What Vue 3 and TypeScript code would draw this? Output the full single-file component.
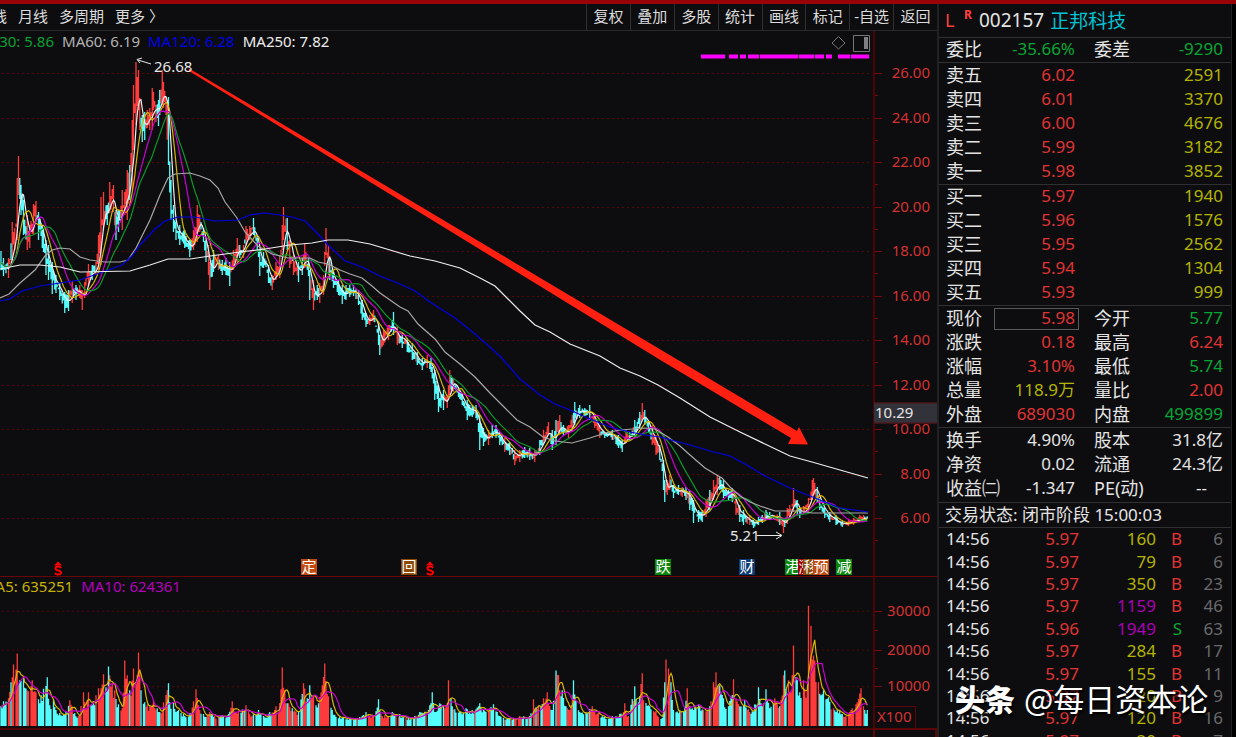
<script setup lang="ts">
type Pt = [number, number]
type Band = [number, number, number]

const W = 873
const PRICE_TOP = 31
const PRICE_H = 545
const VOL_TOP = 576
const VOL_H = 152
const BASE = 726
const STEP = 1.25
const LAST = 868

const band: Band[] = [
  [0, 241, 283], [4, 258, 276], [9, 258, 278], [12, 222, 262], [15, 228, 250], [17, 178, 240], [19, 156, 195],
  [21, 185, 215], [24, 200, 235], [27, 215, 250], [30, 225, 248], [33, 204, 235], [36, 201, 222], [39, 212, 240],
  [42, 225, 248], [44, 228, 252], [46, 240, 275], [49, 245, 280], [52, 262, 294], [56, 275, 293], [60, 283, 300],
  [65, 292, 313], [68, 290, 311], [72, 281, 303], [76, 285, 300], [80, 285, 298], [82, 290, 310], [85, 282, 298],
  [88, 264, 286], [92, 265, 280], [96, 262, 275], [99, 235, 270], [101, 197, 265], [104, 192, 230], [107, 205, 225],
  [110, 182, 213], [113, 185, 212], [116, 210, 240], [119, 210, 232], [122, 190, 230], [125, 192, 215],
  [127, 170, 220], [130, 165, 200], [132, 120, 190], [134, 85, 150], [136, 62, 125], [138, 70, 110], [140, 98, 130],
  [142, 115, 142], [145, 112, 140], [147, 110, 128], [150, 108, 130], [152, 88, 130], [154, 92, 110],
  [156, 105, 122], [158, 100, 126], [160, 90, 115], [162, 70, 105], [164, 82, 108], [166, 97, 115], [168, 97, 165],
  [169, 125, 190], [171, 180, 220], [173, 205, 232], [176, 222, 240], [180, 225, 245], [185, 230, 248],
  [190, 240, 257], [194, 230, 250], [197, 205, 242], [200, 215, 232], [203, 228, 242], [206, 240, 262],
  [208, 245, 275], [210, 262, 290], [214, 250, 272], [218, 255, 270], [222, 260, 275], [226, 258, 275],
  [230, 262, 286], [233, 250, 270], [237, 238, 262], [240, 245, 258], [243, 245, 258], [246, 226, 245],
  [250, 226, 240], [254, 218, 235], [257, 238, 250], [260, 250, 276], [264, 252, 268], [268, 265, 283],
  [272, 275, 290], [276, 262, 280], [280, 255, 278], [282, 225, 250], [284, 207, 240], [287, 218, 250],
  [290, 240, 268], [294, 255, 275], [298, 262, 282], [302, 258, 275], [305, 243, 268], [308, 258, 276],
  [310, 270, 300], [313, 280, 310], [317, 285, 300], [320, 283, 303], [323, 275, 295], [326, 228, 255],
  [328, 245, 275], [330, 258, 280], [334, 272, 288], [338, 280, 295], [342, 285, 304], [346, 285, 300],
  [350, 285, 297], [354, 285, 296], [358, 290, 305], [362, 300, 320], [366, 313, 327], [370, 315, 325],
  [374, 310, 322], [378, 325, 345], [380, 335, 355], [384, 330, 345], [388, 325, 340], [393, 312, 335],
  [397, 325, 345], [402, 333, 348], [407, 338, 352], [412, 343, 360], [417, 352, 365], [422, 358, 370],
  [427, 355, 368], [431, 358, 372], [435, 370, 400], [439, 385, 412], [443, 390, 410], [447, 395, 408],
  [450, 370, 395], [454, 378, 392], [458, 387, 397], [462, 393, 405], [467, 400, 420], [472, 405, 417],
  [476, 405, 418], [480, 415, 450], [484, 428, 446], [488, 430, 445], [492, 425, 438], [496, 425, 438],
  [500, 432, 445], [505, 438, 452], [510, 442, 455], [515, 450, 465], [520, 450, 462], [525, 447, 458],
  [530, 448, 460], [535, 450, 462], [540, 440, 455], [544, 430, 445], [548, 422, 435], [552, 430, 450],
  [556, 420, 445], [560, 415, 435], [564, 425, 436], [568, 425, 438], [572, 415, 432], [575, 402, 425],
  [580, 405, 418], [585, 408, 416], [590, 405, 420], [595, 415, 428], [600, 425, 438], [605, 432, 438],
  [612, 430, 440], [618, 435, 448], [622, 440, 452], [626, 430, 443], [630, 432, 440], [635, 420, 438],
  [640, 412, 428], [642, 403, 420], [645, 410, 425], [648, 420, 432], [652, 425, 445], [656, 435, 455],
  [660, 445, 460], [663, 460, 490], [665, 480, 502], [667, 480, 495], [670, 475, 490], [674, 485, 498],
  [678, 485, 495], [682, 487, 497], [686, 487, 500], [690, 490, 510], [694, 500, 523], [698, 510, 522],
  [702, 510, 522], [706, 500, 517], [710, 490, 510], [714, 480, 500], [717, 475, 495], [720, 477, 490],
  [724, 480, 498], [728, 490, 500], [732, 488, 502], [736, 497, 515], [740, 505, 522], [744, 510, 525],
  [750, 515, 525], [754, 520, 528], [758, 517, 525], [762, 515, 523], [766, 510, 520], [770, 512, 520],
  [775, 515, 520], [780, 512, 525], [784, 520, 533], [787, 508, 524], [790, 505, 520], [794, 488, 512],
  [797, 500, 515], [800, 508, 518], [804, 506, 514], [808, 498, 512], [812, 480, 500], [814, 478, 495],
  [817, 487, 503], [820, 498, 510], [825, 508, 518], [830, 512, 522], [836, 515, 525], [842, 521, 527],
  [848, 520, 526], [854, 518, 525], [860, 515, 522], [864, 515, 522], [869, 513, 523],
]

const volume: Pt[] = [
  [0, 701], [4, 701], [8, 698], [11, 682], [14, 664], [17, 653], [20, 680], [23, 678], [27, 690], [32, 680],
  [36, 692], [41, 695], [47, 677], [50, 705], [53, 700], [56, 710], [60, 713], [66, 712], [70, 700], [75, 713],
  [79, 716], [83, 692], [86, 708], [88, 692], [92, 705], [96, 695], [98, 688], [101, 688], [104, 674], [107, 690],
  [109, 666], [112, 683], [115, 690], [118, 704], [122, 708], [125, 660], [127, 675], [130, 690], [134, 668],
  [137, 675], [139, 652], [141, 690], [145, 702], [150, 706], [153, 700], [157, 708], [160, 712], [164, 702],
  [168, 683], [170, 702], [174, 702], [178, 710], [184, 714], [190, 713], [196, 689], [199, 705], [204, 714],
  [210, 712], [215, 716], [222, 715], [228, 714], [232, 701], [236, 712], [246, 705], [250, 714], [258, 710],
  [264, 716], [270, 712], [276, 706], [279, 712], [282, 667], [285, 690], [288, 703], [292, 708], [298, 712],
  [304, 683], [307, 698], [310, 685], [314, 695], [318, 703], [322, 685], [325, 663], [328, 696], [332, 710],
  [340, 716], [350, 718], [360, 717], [366, 712], [374, 716], [378, 699], [382, 716], [392, 712], [400, 714],
  [408, 718], [415, 716], [420, 712], [428, 710], [432, 692], [435, 712], [440, 703], [446, 706], [449, 680],
  [452, 706], [460, 712], [466, 708], [472, 710], [480, 703], [486, 712], [493, 704], [500, 716], [510, 718],
  [520, 716], [530, 716], [533, 699], [538, 705], [543, 698], [547, 692], [552, 710], [556, 670], [558, 675],
  [562, 690], [566, 706], [570, 710], [573, 680], [576, 700], [580, 712], [586, 712], [592, 706], [598, 713],
  [605, 717], [612, 716], [620, 714], [625, 703], [628, 716], [635, 686], [638, 702], [642, 673], [644, 700],
  [650, 706], [656, 711], [662, 718], [666, 659], [668, 668], [671, 682], [674, 710], [680, 710], [684, 712],
  [687, 688], [690, 706], [698, 704], [704, 710], [710, 706], [713, 682], [716, 672], [720, 685], [724, 698],
  [728, 706], [733, 679], [736, 698], [740, 706], [745, 700], [750, 712], [755, 704], [758, 687], [762, 706],
  [766, 689], [770, 708], [775, 698], [780, 706], [783, 675], [785, 670], [788, 680], [791, 692], [794, 645],
  [797, 680], [800, 692], [803, 680], [807, 690], [809, 605], [811, 625], [813, 655], [815, 660], [818, 682],
  [821, 695], [824, 690], [828, 697], [834, 708], [840, 710], [846, 716], [852, 708], [857, 702], [861, 688],
  [864, 706], [867, 710], [869, 680],
]

const ma60: Pt[] = [
  [0, 298], [9, 294], [20, 283], [35, 270], [45, 256], [52, 250], [60, 248], [70, 249], [80, 257], [90, 260],
  [105, 262], [120, 262], [128, 260], [136, 248], [150, 220], [160, 195], [168, 178], [175, 174], [190, 173],
  [200, 176], [210, 180], [218, 188], [225, 202], [237, 218], [245, 232], [258, 246], [272, 254], [288, 258],
  [310, 258], [318, 262], [328, 264], [340, 270], [350, 274], [362, 278], [372, 286], [380, 293], [400, 307],
  [408, 311], [418, 324], [435, 339], [445, 352], [460, 364], [475, 377], [490, 393], [505, 408], [517, 420],
  [530, 427], [543, 437], [555, 441], [572, 443], [590, 438], [605, 433], [620, 430], [645, 428], [655, 429],
  [668, 437], [680, 446], [690, 455], [705, 468], [715, 474], [722, 478], [730, 487], [740, 496], [750, 502],
  [760, 506], [775, 511], [800, 511], [812, 513], [868, 513],
]
const ma120: Pt[] = [
  [0, 301], [10, 299], [22, 291], [40, 286], [60, 283], [80, 280], [100, 273], [122, 265], [132, 256], [140, 245],
  [155, 229], [165, 221], [178, 217], [195, 217], [215, 221], [238, 220], [250, 215], [265, 213], [280, 215],
  [292, 217], [305, 221], [315, 231], [330, 247], [345, 261], [362, 267], [380, 276], [400, 284], [415, 291],
  [430, 302], [455, 318], [475, 334], [500, 356], [520, 379], [540, 395], [555, 404], [570, 410], [590, 419],
  [610, 427], [630, 432], [645, 435], [660, 437], [675, 441], [690, 445], [710, 451], [730, 456], [745, 464],
  [765, 476], [790, 488], [810, 496], [825, 502], [840, 508], [868, 512],
]
const ma250: Pt[] = [
  [0, 269], [20, 265], [40, 265], [60, 267], [80, 272], [130, 271], [150, 265], [168, 259], [190, 259], [210, 256],
  [240, 252], [265, 249], [290, 245], [312, 243], [328, 240], [348, 240], [370, 244], [380, 247], [410, 256],
  [435, 261], [460, 268], [480, 278], [495, 286], [508, 299], [520, 311], [535, 325], [550, 332], [570, 344],
  [600, 356], [620, 368], [640, 376], [658, 385], [680, 398], [710, 417], [740, 432], [765, 444], [790, 456],
  [812, 462], [840, 470], [868, 478],
]

let seed = 20211
function rand(): number {
  seed = (seed * 16807) % 2147483647
  return seed / 2147483647
}

function at(points: number[][], x: number, k: number): number {
  for (let i = 1; i < points.length; i++) {
    const a = points[i - 1]
    const b = points[i]
    if (x <= b[0]) return a[k] + ((b[k] - a[k]) * (x - a[0])) / (b[0] - a[0])
  }
  return points[points.length - 1][k]
}

function average(values: number[], n: number): number[] {
  return values.map((_, i) => {
    const part = values.slice(Math.max(0, i - n + 1), i + 1)
    return part.reduce((s, v) => s + v, 0) / part.length
  })
}

const line = (pts: number[][]): string => 'M' + pts.map((p) => p[0] + ' ' + p[1].toFixed(1)).join('L')

const xs: number[] = []
for (let x = 1; x <= LAST; x += STEP) xs.push(x)

const closes: number[] = []
const wick = { up: '', down: '' }
const volBar = { up: '', down: '' }
const vols: number[] = []
let run = 0
let side: 'up' | 'down' = 'up'

xs.forEach((x, i) => {
  const key = band.find((p) => Math.abs(p[0] - x) < 0.63)
  const top = at(band, x, 1)
  const bottom = at(band, x, 2)
  const span = bottom - top
  const hi = key ? key[1] : top + span * (0.1 + rand() * 0.4)
  const lo = key ? key[2] : bottom - span * (0.1 + rand() * 0.4)
  const close = (top + bottom) / 2 + (rand() - 0.5) * span * 0.35
  if (run <= 0) {
    const drift = at(band, x + 2, 1) - at(band, x - 4, 1)
    side = rand() < 0.5 - Math.max(-0.42, Math.min(0.34, drift / 24)) ? 'up' : 'down'
    run = 1 + Math.floor(rand() * 3)
  }
  run--
  closes.push(close)
  wick[side] += `M${x} ${hi.toFixed(1)}V${lo.toFixed(1)}`

  const peak = volume.find((p) => Math.abs(p[0] - x) < 0.63)
  const height = peak ? BASE - peak[1] : (BASE - at(volume, x, 1)) * (0.7 + rand() * 0.28)
  vols.push(BASE - height)
  if (i % 6 !== 5 || peak) volBar[side] += `M${x} ${BASE}V${(BASE - height).toFixed(1)}`
})

const zip = (ys: number[]): number[][] => xs.map((x, i) => [x, ys[i]])

const priceLines = [
  { name: 'ma5', d: line(zip(average(closes, 5))) },
  { name: 'ma10', d: line(zip(average(closes, 11))) },
  { name: 'ma20', d: line(zip(average(closes, 21))) },
  { name: 'ma30', d: line(zip(average(closes, 31))) },
  { name: 'ma60', d: line(ma60) },
  { name: 'ma120', d: line(ma120) },
  { name: 'ma250', d: line(ma250) },
]
const volLines = [
  { name: 'ma10', d: line(zip(average(vols, 6))) },
  { name: 'ma20', d: line(zip(average(vols, 12))) },
]

const priceTicks = [26, 24, 22, 20, 18, 16, 14, 12, 10, 8, 6].map((v) => ({
  label: v.toFixed(2),
  y: Math.round(73 + (26 - v) * 22.25),
}))
const volTicks = [
  { label: '30000', y: 610 },
  { label: '20000', y: 649 },
  { label: '10000', y: 686 },
]
const pctY = (y: number, top: number, h: number): string => (((y - top) / h) * 100).toFixed(3) + '%'
const pctX = (x: number): string => ((x / W) * 100).toFixed(3) + '%'

const signals: Pt[] = [
  [701, 725], [729, 738], [740, 746], [748, 759], [760, 798], [799, 814], [815, 824], [826, 832], [838, 850],
  [851, 869],
]

const periods = ['线', '月线', '多周期', '更多 〉']
const actions = ['复权', '叠加', '多股', '统计', '画线', '标记', '-自选', '返回']

const markers = [
  { text: '定', x: 301, tone: 'orange' },
  { text: '回', x: 401, tone: 'brown' },
  { text: '跌', x: 655, tone: 'green' },
  { text: '财', x: 739, tone: 'navy' },
  { text: '港', x: 785, tone: 'green' },
  { text: '涨', x: 798, tone: 'crimson' },
  { text: '移', x: 803, tone: 'brown' },
  { text: '预', x: 813, tone: 'orange' },
  { text: '减', x: 836, tone: 'green' },
]
const splits = [58, 430]

const asks = [['卖五', '6.02', '2591'], ['卖四', '6.01', '3370'], ['卖三', '6.00', '4676'], ['卖二', '5.99', '3182'], ['卖一', '5.98', '3852']]
const bids = [['买一', '5.97', '1940'], ['买二', '5.96', '1576'], ['买三', '5.95', '2562'], ['买四', '5.94', '1304'], ['买五', '5.93', '999']]

interface Stat { label: string; value: string; tone: string; boxed?: boolean }
const stat = (label: string, value: string, tone: string, boxed = false): Stat => ({ label, value, tone, boxed })
const quote = [
  stat('现价', '5.98', 'red', true), stat('今开', '5.77', 'lime'),
  stat('涨跌', '0.18', 'red'), stat('最高', '6.24', 'red'),
  stat('涨幅', '3.10%', 'red'), stat('最低', '5.74', 'lime'),
  stat('总量', '118.9万', 'gold'), stat('量比', '2.00', 'red'),
  stat('外盘', '689030', 'red'), stat('内盘', '499899', 'lime'),
]
const basics = [
  stat('换手', '4.90%', 'pale'), stat('股本', '31.8亿', 'pale'),
  stat('净资', '0.02', 'pale'), stat('流通', '24.3亿', 'pale'),
  stat('收益㈡', '-1.347', 'pale'), stat('PE(动)', '--', 'pale dash'),
]
const trades = [
  ['5.97', '160', 'B', '6'], ['5.97', '79', 'B', '6'], ['5.97', '350', 'B', '23'], ['5.97', '1159', 'B', '46'],
  ['5.96', '1949', 'S', '63'], ['5.97', '284', 'B', '17'], ['5.97', '155', 'B', '11'], ['5.97', '20', 'B', '9'],
  ['5.97', '120', 'B', '16'], ['5.97', '20', 'B', '7'],
]
</script>

<template>
  <div class="app">
    <div class="strip"></div>
    <div class="body">
      <main class="left">
        <nav class="toolbar">
          <div class="periods">
            <button v-for="p in periods" :key="p" type="button">{{ p }}</button>
          </div>
          <div class="actions">
            <button v-for="a in actions" :key="a" type="button">{{ a }}</button>
          </div>
        </nav>

        <div class="charts">
          <section class="plot">
            <svg :viewBox="`0 ${PRICE_TOP} ${W} ${PRICE_H}`" preserveAspectRatio="none">
              <g class="grid">
                <path v-for="t in priceTicks" :key="t.y" :d="`M2 ${t.y + 0.5}H870`" />
              </g>
              <path class="up" :d="wick.up" />
              <path class="down" :d="wick.down" />
              <path v-for="l in priceLines" :key="l.name" :class="['avg', l.name]" :d="l.d" />
              <path v-for="s in signals" :key="s[0]" class="signal" :d="`M${s[0]} 56.5H${s[1]}`" />
              <path class="pointer" d="M151 64L138 60M142 58L137 59.500L140 63" />
              <path class="pointer" d="M757 535.500H781M776 532L782 535.500L776 539" />
              <polygon class="trend" points="189,69 190,69 678,360 797,431 799,427 808,444.500 788,444 791,438 662,361 189,71" />
              <path class="tool" d="M838.500 36.500L845 43L838.500 49L832 43Z" />
              <path class="tool" d="M853.500 35.500H869.500V51.500H853.500Z" />
              <rect class="toolfill" x="864" y="37" width="4" height="12" />
            </svg>
            <p class="legend price-legend">
              <span class="c30">MA30: 5.86</span><span class="c60">MA60: 6.19</span><span class="c120">MA120: 6.28</span><span class="c250">MA250: 7.82</span>
            </p>
            <span class="extreme" :style="{ left: pctX(154), top: pctY(66, PRICE_TOP, PRICE_H) }">26.68</span>
            <span class="extreme" :style="{ left: pctX(730), top: pctY(535, PRICE_TOP, PRICE_H) }">5.21</span>
            <span v-for="m in markers" :key="m.x" :class="['marker', m.tone]" :style="{ left: pctX(m.x) }">{{ m.text }}</span>
            <svg v-for="x in splits" :key="x" class="split" viewBox="0 0 10 15" :style="{ left: pctX(x - 5) }">
              <path class="roof" d="M1 4.500L5 0.500L9 4.500Z" />
              <path class="curve" d="M8 7C7 5 2.500 5 2.500 7.500S8 9 8 11.500S3 14 2 12" />
            </svg>
          </section>
          <div class="axis price-axis">
            <span v-for="t in priceTicks" :key="t.y" class="tick" :style="{ top: pctY(t.y, PRICE_TOP, PRICE_H) }">{{ t.label }}</span>
            <i v-for="t in priceTicks" :key="'m' + t.y" class="minor" :style="{ top: pctY(t.y + 22, PRICE_TOP, PRICE_H) }"></i>
            <span class="cursor" :style="{ top: pctY(412.5, PRICE_TOP, PRICE_H) }">10.29</span>
          </div>

          <section class="plot volume">
            <svg :viewBox="`0 ${VOL_TOP} ${W} ${VOL_H}`" preserveAspectRatio="none">
              <g class="grid">
                <path v-for="t in volTicks" :key="t.y" :d="`M2 ${t.y + 0.5}H870`" />
              </g>
              <path class="up" :d="volBar.up" />
              <path class="down" :d="volBar.down" />
              <path v-for="l in volLines" :key="l.name" :class="['avg', l.name]" :d="l.d" />
            </svg>
            <p class="legend vol-legend"><span class="v5">MA5: 635251</span><span class="v10">MA10: 624361</span></p>
          </section>
          <div class="axis vol-axis">
            <span v-for="t in volTicks" :key="t.y" class="tick" :style="{ top: pctY(t.y, VOL_TOP, VOL_H) }">{{ t.label }}</span>
            <i v-for="t in volTicks.slice(0, 2)" :key="'m' + t.y" class="minor" :style="{ top: pctY(t.y + 19, VOL_TOP, VOL_H) }"></i>
            <span class="unit">X100</span>
          </div>
          <div class="foot"></div>
          <div class="foot foot-axis"></div>
        </div>
      </main>

      <aside class="panel">
        <h1 class="title"><span class="flag-l">L</span><sup>R</sup><span class="code">002157</span><span class="name">正邦科技</span></h1>
        <dl class="stats ratio">
          <div class="stat"><dt>委比</dt><dd class="lime">-35.66%</dd></div>
          <div class="stat"><dt>委差</dt><dd class="lime">-9290</dd></div>
        </dl>
        <table class="book asks">
          <tbody>
            <tr v-for="r in asks" :key="r[0]">
              <th scope="row">{{ r[0] }}</th>
              <td class="price red">{{ r[1] }}</td>
              <td class="gold">{{ r[2] }}</td>
            </tr>
          </tbody>
        </table>
        <table class="book">
          <tbody>
            <tr v-for="r in bids" :key="r[0]">
              <th scope="row">{{ r[0] }}</th>
              <td class="price red">{{ r[1] }}</td>
              <td class="gold">{{ r[2] }}</td>
            </tr>
          </tbody>
        </table>
        <dl class="stats">
          <div v-for="s in quote" :key="s.label" class="stat">
            <dt>{{ s.label }}</dt>
            <dd :class="[s.tone, { boxed: s.boxed }]">{{ s.value }}</dd>
          </div>
        </dl>
        <dl class="stats basics">
          <div v-for="s in basics" :key="s.label" class="stat">
            <dt>{{ s.label }}</dt>
            <dd :class="s.tone">{{ s.value }}</dd>
          </div>
        </dl>
        <p class="status">交易状态: 闭市阶段 15:00:03</p>
        <table class="trades">
          <tbody>
            <tr v-for="(t, i) in trades" :key="i">
              <td class="time">14:56</td>
              <td class="at red">{{ t[0] }}</td>
              <td :class="['qty', Number(t[1]) > 1000 ? 'violet' : 'gold']">{{ t[1] }}</td>
              <td :class="['side', t[2] === 'B' ? 'red' : 'lime']">{{ t[2] }}</td>
              <td class="count">{{ t[3] }}</td>
            </tr>
          </tbody>
        </table>
        <p class="credit"><b>头条</b><span>@每日资本论</span></p>
      </aside>
    </div>
  </div>
</template>

<style>
html,
body {
  background: #0d0d0f;
}
</style>

<style scoped>
.app {
  display: flex;
  flex-direction: column;
  height: 100vh;
  overflow: hidden;
  background: #000;
  color: #d8d8d8;
  font-family: "Noto Sans", "Noto Sans CJK SC", sans-serif;
  font-size: 15px;
}
p,
h1,
dl,
dd {
  margin: 0;
}
button {
  padding: 0 0 3px;
  border: 0;
  background: none;
  color: #dcdcdc;
  font: inherit;
  white-space: nowrap;
}
.strip {
  flex: none;
  height: 4px;
  background: #970306;
}
.body {
  flex: 1;
  min-height: 0;
  display: grid;
  grid-template-columns: minmax(0, 1fr) 299px;
}
.left {
  display: flex;
  flex-direction: column;
  min-width: 0;
  min-height: 0;
  background: #0d0d0f;
}
.toolbar {
  flex: none;
  display: flex;
  justify-content: space-between;
  height: 26px;
  border-bottom: 1px solid #29292b;
}
.periods {
  display: flex;
  gap: 11px;
  margin-left: -8px;
}
.actions {
  display: flex;
  width: 351px;
}
.actions button {
  flex: 1;
  border-left: 1px solid #303032;
}
.charts {
  flex: 1;
  min-height: 0;
  display: grid;
  grid-template-columns: minmax(0, 1fr) 64px;
  grid-template-rows: 545fr 152fr 9px;
}
.plot {
  position: relative;
  min-width: 0;
  min-height: 0;
  overflow: hidden;
}
.plot > svg:first-child {
  display: block;
  position: absolute;
  inset: 0;
  width: 100%;
  height: 100%;
}
.plot path {
  fill: none;
}
.grid path {
  stroke: #560508;
  stroke-dasharray: 2 3;
}
.up {
  stroke: #ff3a3a;
  stroke-width: 1.3;
}
.down {
  stroke: #54fcfc;
  stroke-width: 1.3;
}
.avg {
  stroke-width: 1.2;
}
.ma5,
.ma250 {
  stroke: #eeeeee;
}
.ma10 {
  stroke: #d8b800;
}
.ma20 {
  stroke: #c800d0;
}
.ma30 {
  stroke: #0a9a2c;
}
.ma60 {
  stroke: #a8a8a8;
}
.ma120 {
  stroke: #0000e6;
}
.signal {
  stroke: #ff00ff;
  stroke-width: 4;
}
.pointer {
  stroke: #e8e8e8;
}
.trend {
  fill: #ff2012;
}
.tool {
  fill: none;
  stroke: #77777a;
}
.toolfill {
  fill: #808083;
}
.legend {
  position: absolute;
  display: flex;
  gap: 8px;
  line-height: 20px;
  white-space: nowrap;
}
.price-legend {
  left: -24px;
  top: 0;
}
.vol-legend {
  left: -18px;
  top: -1px;
}
.c30 {
  color: #0aa033;
}
.c60 {
  color: #b4b4b4;
}
.c120 {
  color: #0000e6;
}
.c250 {
  color: #ededed;
}
.v5 {
  color: #c8b400;
}
.v10 {
  color: #b400be;
}
.extreme {
  position: absolute;
  transform: translateY(-50%);
  line-height: 20px;
  color: #e6e6e6;
}
.marker {
  position: absolute;
  bottom: 1px;
  width: 16px;
  height: 16px;
  line-height: 15px;
  font-size: 15px;
  text-align: center;
  color: #fff;
}
.orange {
  background: #c04a10;
}
.brown {
  background: #8a4a04;
}
.green {
  background: #098609;
}
.navy {
  background: #0b3a74;
}
.crimson {
  background: #a00008;
}
.split {
  position: absolute;
  bottom: 0;
  width: 10px;
  height: 15px;
}
.plot .split .roof {
  fill: #f00;
}
.split .curve {
  stroke: #f00;
  stroke-width: 2;
}
.axis {
  position: relative;
  border-left: 2px solid #4c0406;
  color: #d43232;
}
.volume,
.vol-axis {
  border-top: 1px solid #6a0508;
}
.tick {
  position: absolute;
  right: 7px;
  transform: translateY(-50%);
  padding-bottom: 2px;
  line-height: 20px;
}
.tick::before {
  content: "";
  position: absolute;
  right: 48px;
  top: 11px;
  width: 7px;
  height: 1px;
  background: #7a0a0c;
}
.minor {
  position: absolute;
  left: 0;
  width: 3px;
  height: 1px;
  background: #7a0a0c;
}
.cursor {
  position: absolute;
  left: -1px;
  right: 0;
  transform: translateY(-50%);
  padding: 0 0 2px 1px;
  border: 1px solid #5c0a0c;
  border-width: 1px 0;
  line-height: 17px;
  background: #32323a;
  color: #e6e6e6;
}
.unit {
  position: absolute;
  left: 0;
  bottom: 0;
  padding: 0 3px 3px 2px;
  border: 1px solid #5c0608;
  border-width: 1px 1px 0 0;
  line-height: 18px;
}
.foot {
  border-top: 2px solid #4c0406;
}
.foot-axis {
  border: 2px solid #5c0608;
  border-bottom: 0;
}

.panel {
  position: relative;
  min-height: 0;
  margin-right: 4px;
  overflow: hidden;
  border: 2px solid #222224;
  border-width: 0 1px 0 2px;
  background: #0d0d0f;
  font-size: 17px;
  color: #e4e4e4;
}
.panel > * {
  border-bottom: 1px solid #303032;
}
.title {
  display: flex;
  align-items: center;
  height: 31px;
  padding: 0 0 2px 6px;
  font-size: 18px;
  font-weight: 400;
}
.flag-l {
  width: 19px;
  color: #ff4040;
}
.title sup {
  width: 15px;
  margin-bottom: 9px;
  font-size: 12px;
  line-height: 14px;
  font-weight: 700;
  color: #ff4040;
}
.code {
  font-size: 19px;
}
.name {
  margin-left: 6px;
  font-size: 19px;
  color: #00c4d4;
}
.stats {
  display: grid;
  grid-template-columns: 1fr 1fr;
  column-gap: 19px;
  padding: 1px 8px 0 7px;
}
.stat {
  display: flex;
  justify-content: space-between;
  height: 24px;
  line-height: 22px;
  white-space: nowrap;
}
.ratio {
  padding-top: 0;
}
.basics {
  padding-bottom: 1px;
}
dt,
th {
  font-size: 18px;
  font-weight: 400;
}
.boxed {
  box-sizing: border-box;
  width: 85px;
  height: 22px;
  margin: 1px -4px 0 0;
  padding-right: 3px;
  border: 1px solid #5a5a5c;
  line-height: 18px;
  text-align: right;
}
.dash {
  padding-right: 16px;
}
table {
  display: table;
  width: 100%;
  border-collapse: separate;
  border-spacing: 0;
  table-layout: fixed;
}
th,
td {
  padding: 0;
  text-align: right;
}
.book {
  padding: 0 8px 0 7px;
}
.asks {
  padding-top: 1px;
}
.book th,
.book td {
  height: 22px;
  padding-bottom: 2px;
  line-height: 22px;
}
.book th {
  width: 48px;
  text-align: left;
}
.book .price {
  width: 81px;
}
.status {
  padding-left: 6px;
  font-size: 17px;
  line-height: 24px;
}
.trades {
  height: 225px;
  padding: 0 8px 0 7px;
}
.trades td {
  line-height: 20px;
}
.trades .time {
  width: 50px;
  text-align: left;
}
.trades .at {
  width: 83px;
}
.trades .qty {
  width: 77px;
}
.trades .side {
  width: 26px;
}
.trades .count {
  color: #6a6a6c;
}
.red {
  color: #e03434;
}
.lime {
  color: #06a636;
}
.gold {
  color: #b4b400;
}
.violet {
  color: #aa00b4;
}
.pale {
  color: #e4e4e4;
}
.credit {
  position: absolute;
  left: 16px;
  bottom: 19px;
  display: flex;
  align-items: center;
  gap: 9px;
  border: 0;
  font-family: "Noto Sans CJK SC", sans-serif;
  font-size: 31px;
  line-height: 40px;
  white-space: nowrap;
  color: #fff;
  text-shadow: 2px 2px 2px #000;
}
.credit b {
  font-size: 30px;
  font-weight: 900;
}
</style>
